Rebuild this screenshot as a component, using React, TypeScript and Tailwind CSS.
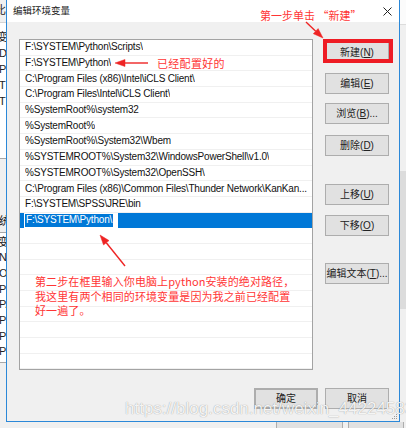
import React from "react";

const paths = [
  "F:\\SYSTEM\\Python\\Scripts\\",
  "F:\\SYSTEM\\Python\\",
  "C:\\Program Files (x86)\\Intel\\iCLS Client\\",
  "C:\\Program Files\\Intel\\iCLS Client\\",
  "%SystemRoot%\\system32",
  "%SystemRoot%",
  "%SystemRoot%\\System32\\Wbem",
  "%SYSTEMROOT%\\System32\\WindowsPowerShell\\v1.0\\",
  "%SYSTEMROOT%\\System32\\OpenSSH\\",
  "C:\\Program Files (x86)\\Common Files\\Thunder Network\\KanKan...",
  "F:\\SYSTEM\\SPSS\\JRE\\bin",
];

const emptyRows = 9;

// arrowhead triangle from the tail (fx, fy) towards the tip (tx, ty)
function head(tx: number, ty: number, fx: number, fy: number, len = 10, w = 3.5) {
  const dx = tx - fx;
  const dy = ty - fy;
  const d = Math.hypot(dx, dy);
  const ux = dx / d;
  const uy = dy / d;
  const bx = tx - ux * len;
  const by = ty - uy * len;
  return {
    points: `${tx},${ty} ${bx - uy * w},${by + ux * w} ${bx + uy * w},${by - ux * w}`,
    bx,
    by,
  };
}

function Arrow({ fx, fy, tx, ty }: { fx: number; fy: number; tx: number; ty: number }) {
  const h = head(tx, ty, fx, fy);
  return (
    <g fill="#ee2424" stroke="#ee2424">
      <line x1={fx} y1={fy} x2={h.bx} y2={h.by} strokeWidth={1.4} />
      <polygon points={h.points} strokeWidth={0.5} />
    </g>
  );
}

function Btn({
  pre,
  hot,
  post = "",
  className = "",
}: {
  pre: string;
  hot?: string;
  post?: string;
  className?: string;
}) {
  return (
    <div
      className={`flex h-[21px] w-[64px] shrink-0 items-center justify-center border border-[#adadad] bg-[#e1e1e1] text-[10px] leading-none text-[#222] ${className}`}
    >
      {pre}
      {hot && <span className="underline underline-offset-1">{hot}</span>}
      {post}
    </div>
  );
}

function LeftStrip() {
  const userVars = ["变量", "DriverData", "Path", "TEMP", "TMP"];
  const sysVars = [
    "NUMBER_OF_PROCESSORS",
    "OS",
    "Path",
    "PATHEXT",
    "PROCESSOR_ARCHITECTURE",
    "PROCESSOR_IDENTIFIER",
    "PROCESSOR_LEVEL",
  ];
  return (
    <div className="flex w-[6px] shrink-0 flex-col overflow-hidden whitespace-nowrap text-[11px] leading-none text-[#222]">
      <div className="flex h-[23px] items-center border-b border-[#d4d4d4] bg-[#f0f0f0] pb-[2px] pl-[1px]">
        <span className="-ml-[6px]">比较</span>
      </div>
      <div className="flex h-[136px] flex-col border-b border-[#a8a8a8] bg-white pt-[6px]">
        {userVars.map((v) => (
          <div key={v} className="flex h-[16px] items-center -ml-[1px]">
            {v === "变量" ? <span className="-ml-[2px]">{v}</span> : v}
          </div>
        ))}
      </div>
      <div className="flex h-[73px] flex-col justify-end pb-[4px]">
        <div className="flex h-[14px] items-center">
          <span className="-ml-[12px]">系统变量(S)</span>
        </div>
      </div>
      <div className="flex h-[131px] flex-col border-y border-[#a8a8a8] bg-white pt-[1px]">
        <div className="flex h-[16px] items-center">
          <span className="-ml-[2px]">变量</span>
        </div>
        {sysVars.map((v, i) => (
          <div key={i} className="flex h-[15.7px] items-center -ml-[1px]">
            {v}
          </div>
        ))}
      </div>
      <div className="flex-1 bg-[#f0f0f0]" />
    </div>
  );
}

function RightStrip() {
  return (
    <div className="flex w-[6px] shrink-0 flex-col bg-[#f0f0f0]">
      <div className="h-[25px] border-b border-[#dcdcdc] bg-[#fbfbfb]" />
      <div className="h-[146px]" />
      <div className="h-[138px] bg-[#dcdcdc]" />
      <div className="flex-1" />
    </div>
  );
}

function PathList() {
  return (
    <div className="flex h-[331px] w-[294px] shrink-0 flex-col overflow-hidden border border-[#a3a3a3] bg-white">
      {paths.map((p, i) => (
        <div
          key={i}
          className="flex h-[15.7px] shrink-0 items-center border-b border-[#f0f0f0] pl-[5px] pr-[2px] text-[10px] leading-none tracking-[-0.2px] text-[#111]"
        >
          <span className="truncate">{p}</span>
        </div>
      ))}
      {/* row being edited */}
      <div className="flex h-[15.7px] shrink-0 items-stretch bg-[#0078d7] pl-[4px]">
        <div className="flex w-[94px] items-center bg-white p-[1px]">
          <span className="flex h-full items-center bg-[#0078d7] pl-[1px] pr-[1px] text-[10px] leading-none tracking-[-0.2px] text-white">
            F:\SYSTEM\Python\
          </span>
        </div>
      </div>
      {Array.from({ length: emptyRows }).map((_, i) => (
        <div key={`e${i}`} className="h-[15.7px] shrink-0 border-b border-[#f0f0f0]" />
      ))}
    </div>
  );
}

function Dialog() {
  return (
    <div className="relative flex w-[394px] shrink-0 flex-col border-x border-b border-[#2b88d8]">
      {/* title bar */}
      <div className="flex h-[22px] shrink-0 items-center justify-between bg-white pl-[6px] pr-[7px]">
        <span className="text-[9.5px] leading-none text-[#1a1a1a]">编辑环境变量</span>
        <svg width="9" height="9" viewBox="0 0 9 9" className="mt-[1px]">
          <path d="M0.5 0.5 L8.5 8.5 M8.5 0.5 L0.5 8.5" stroke="#222" strokeWidth="1" />
        </svg>
      </div>

      <div className="flex flex-1 flex-col bg-[#f0f0f0] pl-[12px] pr-[10px] pt-[17px]">
        <div className="flex gap-[12px]">
          <PathList />
          <div className="flex w-[64px] flex-col">
            <div className="relative mt-[3px]">
              <Btn pre="新建(" hot="N" post=")" />
              <div className="absolute -left-[2px] -right-[4px] -top-[3px] bottom-0 border-[4px] border-[#ee1c24]" />
            </div>
            <Btn pre="编辑(" hot="E" post=")" className="mt-[10px]" />
            <Btn pre="浏览(" hot="B" post=")..." className="mt-[9px]" />
            <Btn pre="删除(" hot="D" post=")" className="mt-[11px]" />
            <Btn pre="上移(" hot="U" post=")" className="mt-[28px]" />
            <Btn pre="下移(" hot="O" post=")" className="mt-[10px]" />
            <Btn pre="编辑文本(" hot="T" post=")..." className="mt-[27px]" />
          </div>
        </div>

        <div className="mt-[18px] flex justify-end gap-[7px]">
          <Btn pre="确定" className="h-[20px] border-2 border-[#2a86dc]" />
          <Btn pre="取消" className="h-[20px]" />
        </div>
      </div>

      {/* size grip */}
      <svg width="6" height="6" viewBox="0 0 6 6" className="absolute bottom-[1px] right-[1px]">
        <rect x="4" y="0" width="1" height="1" fill="#9a9a9a" />
        <rect x="2" y="2" width="1" height="1" fill="#9a9a9a" />
        <rect x="4" y="2" width="1" height="1" fill="#9a9a9a" />
        <rect x="0" y="4" width="1" height="1" fill="#9a9a9a" />
        <rect x="2" y="4" width="1" height="1" fill="#9a9a9a" />
        <rect x="4" y="4" width="1" height="1" fill="#9a9a9a" />
      </svg>
    </div>
  );
}

export default function App() {
  return (
    <div className="relative flex h-[428px] w-[406px] flex-col overflow-hidden bg-[#f0f0f0] font-['Liberation_Sans','Noto_Sans_CJK_SC',sans-serif] text-black">
      <div className="flex h-[422px] shrink-0">
        <LeftStrip />
        <Dialog />
        <RightStrip />
      </div>
      <div className="flex flex-1 items-start">
        <div className="ml-[276px] h-[8px] w-[67px] border-x border-[#adadad] bg-[#e1e1e1]" />
        <div className="ml-[5px] h-[8px] w-[56px] border-x border-[#adadad] bg-[#e1e1e1]" />
      </div>

      {/* red notes drawn on top */}
      <div
        lang="zh-CN"
        className="pointer-events-none absolute left-[260px] top-[8px] font-['Noto_Sans_CJK_SC',sans-serif] text-[11px] leading-[14px] text-[#ff3535]"
      >
        第一步单击 “新建”
      </div>
      <div className="pointer-events-none absolute left-[157px] top-[56px] font-['Noto_Sans_CJK_SC',sans-serif] text-[11px] leading-[14px] tracking-[0.3px] text-[#ff3535]">
        已经配置好的
      </div>
      <div className="pointer-events-none absolute left-[35px] top-[274px] font-['Noto_Sans_CJK_SC',sans-serif] text-[11px] leading-[14.5px] tracking-[0.1px] text-[#ff3535]">
        第二步在框里输入你电脑上python安装的绝对路径，
        <br />
        我这里有两个相同的环境变量是因为我之前已经配置
        <br />
        好一遍了。
      </div>
      <svg width="406" height="428" className="pointer-events-none absolute left-0 top-0">
        <Arrow fx={306} fy={22} tx={323} ty={38} />
        <Arrow fx={148} fy={63} tx={115} ty={63} />
        <Arrow fx={125} fy={266} tx={100} ty={235} />
      </svg>

      <div className="pointer-events-none absolute left-[125px] top-[399px] whitespace-nowrap font-['Liberation_Sans',sans-serif] text-[17px] leading-[20px] text-white/90 [text-shadow:0_0_1px_rgba(0,0,0,0.45)]">
        https://blog.csdn.net/weixin_44224583
      </div>
    </div>
  );
}
